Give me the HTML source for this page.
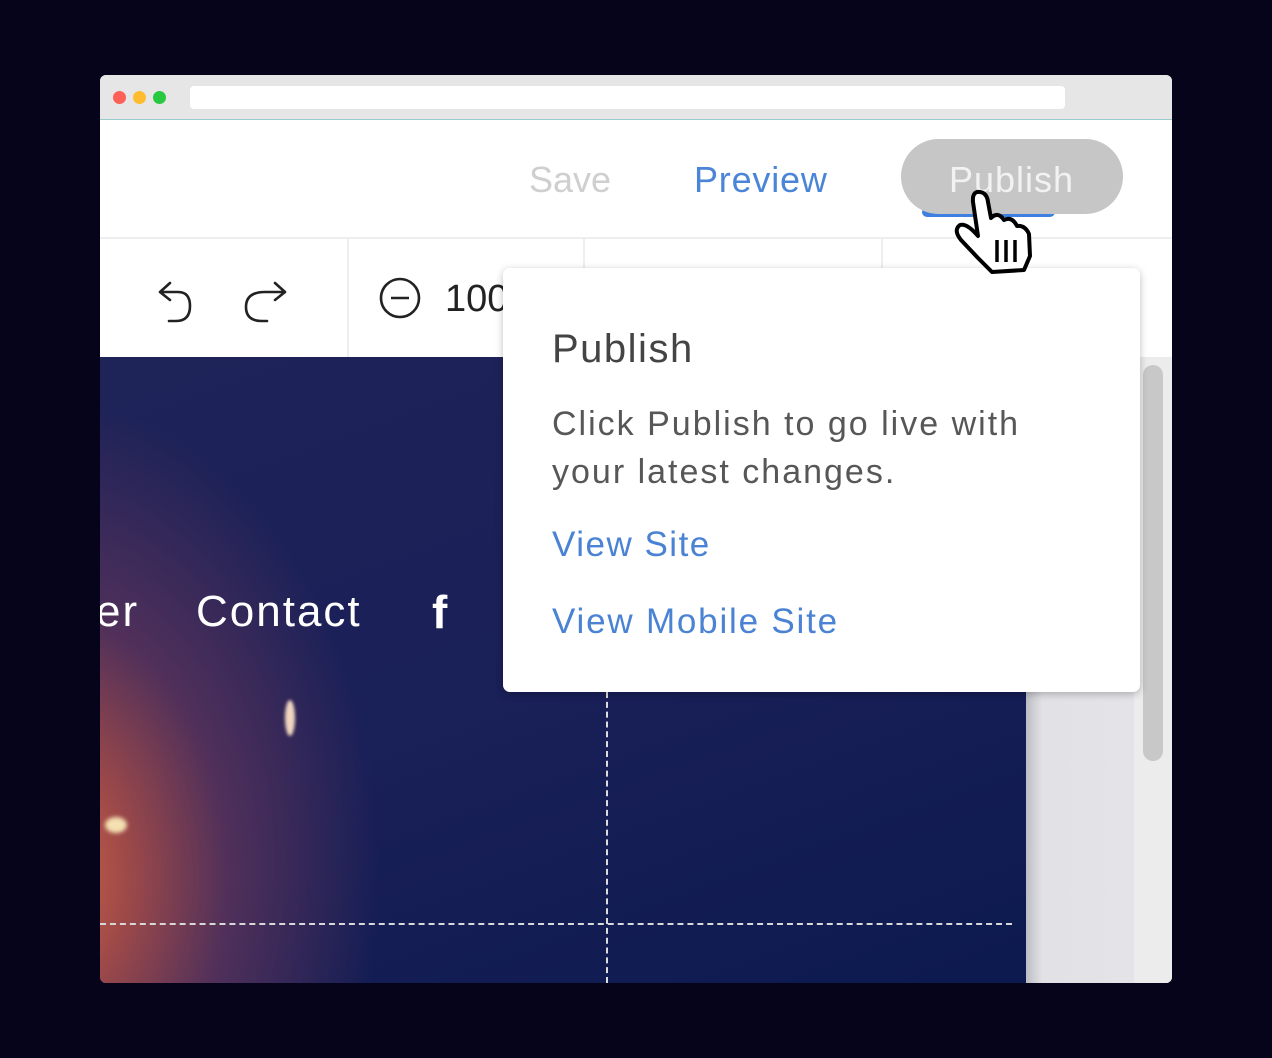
<!DOCTYPE html>
<html><head><meta charset="utf-8"><style>
*{margin:0;padding:0;box-sizing:border-box}
body{width:1272px;height:1058px;background:#05041a;position:relative;overflow:hidden;font-family:"Liberation Sans",sans-serif}
.win{position:absolute;left:100px;top:75px;width:1072px;height:908px;border-radius:6px;overflow:hidden;background:#fff}
.abs{position:absolute}
.t{position:absolute;white-space:nowrap}
</style></head><body>
<div class="win">
  <div class="abs" style="left:0;top:0;width:1072px;height:45px;background:#e6e6e6;border-bottom:1px solid #9cc"></div>
  <div class="abs" style="left:13px;top:16px;width:13px;height:13px;border-radius:50%;background:#fe5f57"></div>
  <div class="abs" style="left:33px;top:16px;width:13px;height:13px;border-radius:50%;background:#febc2e"></div>
  <div class="abs" style="left:53px;top:16px;width:13px;height:13px;border-radius:50%;background:#28c840"></div>
  <div class="abs" style="left:90px;top:11px;width:875px;height:23px;border-radius:4px;background:#fff"></div>

  <div class="abs" style="left:0;top:162px;width:1072px;height:2px;background:#eee"></div>
  <div class="t" style="left:429px;top:84px;font-size:36px;color:#cfcfcf">Save</div>
  <div class="t" style="left:594px;top:84px;font-size:36px;color:#4a85d8;letter-spacing:0.8px">Preview</div>
  <div class="abs" style="left:822px;top:132px;width:133px;height:10px;border-radius:5px;background:#3f7fe0"></div>
  <div class="abs" style="left:801px;top:64px;width:222px;height:75px;border-radius:38px;background:#c6c6c6"></div>
  <div class="t" style="left:849px;top:84px;font-size:36px;color:#f2f2f2;letter-spacing:1px">Publish</div>

  <div class="abs" style="left:247px;top:164px;width:2px;height:118px;background:#eee"></div>
  <div class="abs" style="left:483px;top:164px;width:2px;height:118px;background:#eee"></div>
  <div class="abs" style="left:781px;top:164px;width:2px;height:118px;background:#eee"></div>
  <svg class="abs" style="left:50px;top:200px" width="150" height="50" viewBox="0 0 150 50">
    <path d="M20 8 L10 17 L20 25 M10 17 L28 17 Q40 17 40 31 Q40 46 26 46 L19 46" fill="none" stroke="#222" stroke-width="2.6" stroke-linecap="round" stroke-linejoin="round"/>
    <path d="M125 8 L135 17 L125 25 M135 17 L115 17 Q96 17 96 32 Q96 46 112 46 L117 46" fill="none" stroke="#222" stroke-width="2.6" stroke-linecap="round" stroke-linejoin="round"/>
  </svg>
  <svg class="abs" style="left:279px;top:202px" width="44" height="44"><circle cx="21" cy="21" r="19" fill="none" stroke="#222" stroke-width="2.6"/><path d="M12 21H30" stroke="#222" stroke-width="2.6"/></svg>
  <div class="t" style="left:345px;top:203px;font-size:38px;color:#222">100</div>

  <div class="abs" style="left:0;top:282px;width:926px;height:626px;background:radial-gradient(ellipse 340px 480px at -60px 520px,#d5684a 0%,#a04a48 25%,#51305a 55%,rgba(30,30,85,0) 100%),linear-gradient(160deg,#1e2358 0%,#1a2058 50%,#0c1a4f 100%)"></div>
  <div class="abs" style="left:5px;top:742px;width:22px;height:16px;border-radius:50%;background:#f4e0b0;filter:blur(2px)"></div>
  <div class="abs" style="left:185px;top:625px;width:10px;height:36px;border-radius:50%;background:#f0d6c0;filter:blur(1.5px)"></div>
  <div class="abs" style="left:926px;top:282px;width:108px;height:626px;background:linear-gradient(90deg,#bcbcc4,#e2e2e6 15%,#e4e4e8)"></div>
  <div class="abs" style="left:1034px;top:282px;width:38px;height:626px;background:#ececec"></div>
  <div class="abs" style="left:1043px;top:290px;width:20px;height:396px;border-radius:10px;background:#c8c8c8"></div>

  <div class="t" style="left:-4px;top:512px;font-size:44px;color:#fff;letter-spacing:2px">er</div>
  <div class="t" style="left:96px;top:512px;font-size:44px;color:#fff;letter-spacing:2px">Contact</div>
  <div class="t" style="left:332px;top:510px;font-size:46px;font-weight:bold;color:#fff">f</div>

  <div class="abs" style="left:0;top:848px;width:912px;border-top:2px dashed #d8d8d8"></div>
  <div class="abs" style="left:506px;top:617px;height:291px;border-left:2px dashed #ddd"></div>

  <div class="abs" style="left:403px;top:193px;width:637px;height:424px;border-radius:7px;background:#fff;box-shadow:0 2px 8px rgba(0,0,0,.25)"></div>
  <div class="t" style="left:452px;top:252px;font-size:40px;color:#444;letter-spacing:1.5px">Publish</div>
  <div class="t" style="left:452px;top:325px;font-size:34px;line-height:48px;color:#575757;letter-spacing:2px">Click Publish to go live with<br>your latest changes.</div>
  <div class="t" style="left:452px;top:450px;font-size:35px;color:#4a82d4;letter-spacing:1.5px">View Site</div>
  <div class="t" style="left:452px;top:527px;font-size:35px;color:#4a82d4;letter-spacing:1.8px">View Mobile Site</div>
</div>
<svg class="abs" style="left:0;top:0" width="1272" height="1058">
  <path d="M973 202 Q972 191 980 192 Q987 193 988 202 L991 218 Q998 211 1004 220 Q1012 216 1017 226 Q1025 225 1029 234 L1030 256 L1024 270 L992 272 L978 258 L961 240 Q953 230 960 225 Q967 223 978 236 Z" fill="#fff" stroke="#000" stroke-width="4" stroke-linejoin="round"/>
  <path d="M997 240V262M1006 240V262M1015 240V262" stroke="#000" stroke-width="3.5"/>
</svg>
</body></html>
